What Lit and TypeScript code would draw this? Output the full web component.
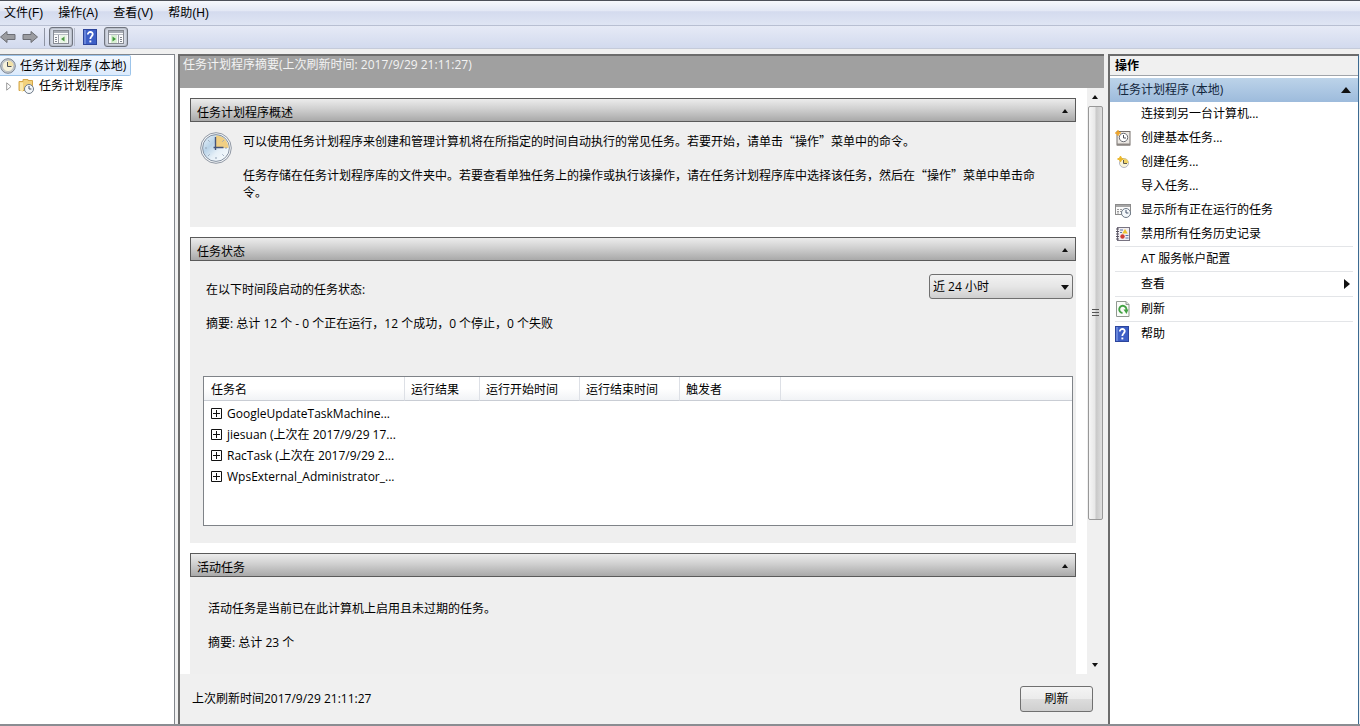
import { LitElement, html, css, svg, nothing } from "lit";
import { customElement, state } from "lit/decorators.js";

const clockIcon = (size: number) => html`
  <svg width=${size} height=${size} viewBox="0 0 32 32" aria-hidden="true">
    <defs>
      <linearGradient id="face" x1="0" y1="0" x2="1" y2="1">
        <stop offset="0" stop-color="#eef6fc" /><stop offset=".35" stop-color="#b9d3e8" /><stop offset=".6" stop-color="#e6f0f8" /><stop offset="1" stop-color="#fbfdfe" />
      </linearGradient>
    </defs>
    <circle cx="16" cy="16" r="15.3" fill="#f3f5f7" stroke="#8f97a3" />
    <circle cx="16" cy="16" r="13.4" fill="url(#face)" stroke="#8692a2" />
    <path d="M16 16V3.500A12.500 12.500 0 0 1 28.500 16z" fill="#f0cf84" />
    <path d="M16 25v2M5 16h2M25 16h2M8.200 8.200l1.400 1.400M22.400 22.400l1.400 1.400M8.200 23.800l1.400-1.400M22.400 9.600l1.400-1.400" stroke="#93a3b6" />
    <path d="M15.500 5v13M13.500 15.500h10" stroke="#46557a" stroke-width="1.400" fill="none" />
  </svg>`;

const smallClock = svg`
  <circle cx="11" cy="11" r="4.500" fill="#f4f8fb" stroke="#6d7987" />
  <path d="M11 8v3h2.400" fill="none" stroke="#44536b" />`;

const treeClock = html`
  <svg width="16" height="16" viewBox="0 0 16 16" aria-hidden="true">
    <circle cx="8" cy="8" r="7.300" fill="#c9cdd2" stroke="#7c8590" />
    <circle cx="8" cy="8" r="5.600" fill="#f6f2dc" stroke="#a5adb5" stroke-width=".6" />
    <path d="M8 8V2.400A5.600 5.600 0 0 1 13.600 8z" fill="#f2e2a8" />
    <path d="M7.500 4v4.500h4" fill="none" stroke="#4a4e58" />
  </svg>`;

const folderIcon = html`
  <svg width="16" height="16" viewBox="0 0 16 16" aria-hidden="true">
    <path d="M1 3.500h4V1.500h5v1h4.500v10H1z" fill="#f3d27c" stroke="#d4a64a" />
    <path d="M2 4.500h3V14l-3-1.500z" fill="#fbe9ae" />
    ${smallClock}
  </svg>`;

const basicTaskIcon = html`
  <svg width="16" height="16" viewBox="0 0 16 16" aria-hidden="true">
    <rect x="2" y="1.500" width="13" height="13.500" fill="#ebe8e4" stroke="#77706c" />
    <path d="M2 13.500h13V15.500H2z" fill="#8c8682" />
    <circle cx="8.500" cy="7.500" r="4.200" fill="#fff" stroke="#6b6d74" />
    <path d="M8.500 5v3H11" fill="none" stroke="#4b4e58" />
    <path d="M3 0l.9 2.100L6 3l-2.100.9L3 6l-.9-2.100L0 3l2.100-.9z" fill="#f0a62a" stroke="#f0a62a" stroke-width=".6" />
  </svg>`;

const newTaskIcon = html`
  <svg width="16" height="16" viewBox="0 0 16 16" aria-hidden="true">
    <circle cx="9" cy="9" r="4.500" fill="#f8f3d8" stroke="#b3b6c4" />
    <path d="M9 9V4.500A4.500 4.500 0 0 1 13.500 9z" fill="#f0d264" />
    <path d="M8.500 6v3.500h3.500" fill="none" stroke="#5c5a4c" />
    <path d="M5.500 2l.9 2.100 2.100.9-2.100.9L5.500 8l-.9-2.100L2.500 5l2.100-.9z" fill="#ecb82a" stroke="#ecb82a" />
  </svg>`;

const runningIcon = html`
  <svg width="16" height="16" viewBox="0 0 16 16" aria-hidden="true">
    <rect x=".5" y="2.500" width="15" height="10" fill="#fafafa" stroke="#8b8b8b" />
    <path d="M1 3h14v2H1z" fill="#a6a6a6" />
    <path d="M2 7.500h2M5 7.500h2M2 9.500h2M5 9.500h2M2 11h2" stroke="#9c9c9c" />
    ${smallClock}
  </svg>`;

const historyIcon = html`
  <svg width="16" height="16" viewBox="0 0 16 16" aria-hidden="true">
    <rect x="2.500" y="1.500" width="12" height="13" fill="#f1eef2" stroke="#777381" />
    <path d="M1 3h3M1 5.500h3M1 8h3M1 10.500h3M1 13h3" stroke="#55515e" />
    <path d="M10 3l2.800 4.500H7.200z" fill="#ecc42e" />
    <path d="M5 4h3M5 6.500h2M10.500 9.500h3M10.500 12h3" stroke="#5b78a8" />
    <circle cx="7.500" cy="10.500" r="2.200" fill="#cf3d33" />
  </svg>`;

const refreshIcon = html`
  <svg width="16" height="16" viewBox="0 0 16 16" aria-hidden="true">
    <path d="M1.500.5h9.500l3 3v12H1.500z" fill="#fafcf9" stroke="#909890" />
    <path d="M11 .5v3h3" fill="#dfe4df" stroke="#909890" />
    <path d="M10.900 10.300A3.600 3.600 0 1 0 7.500 12" fill="none" stroke="#44a244" stroke-width="1.900" />
    <path d="M8.500 8.500h5l-2 4.500z" fill="#44a244" />
  </svg>`;

const helpIcon = html`
  <svg width="14" height="16" viewBox="0 0 14 16" aria-hidden="true">
    <rect x=".5" y=".5" width="13" height="15" fill="#3d5fc6" stroke="#2c459c" />
    <path d="M1 1h2v14H1z" fill="#6785da" />
    <path d="M4.800 5.500C4.800 2 10.200 2.300 9.700 5.500 9.400 7.300 7.300 7.500 7.300 10" fill="none" stroke="#fff" stroke-width="1.800" />
    <rect x="6.400" y="11.500" width="1.900" height="1.900" fill="#fff" />
  </svg>`;

const arrowIcon = (d: string) => html`
  <svg width="16" height="16" viewBox="0 0 16 16" aria-hidden="true">
    <path d=${d} fill="#9b9ca0" stroke="#6c6e75" />
  </svg>`;

const paneIcon = (right: boolean) => html`
  <svg width="16" height="16" viewBox="0 0 16 16" aria-hidden="true">
    <rect x=".5" y="1.500" width="15" height="13" fill="#fbfbfb" stroke="#878b93" />
    <path d="M1 2h14v2H1z" fill="#a6abb4" />
    <path d="M1 5.500h14" stroke="#b7bbc2" />
    ${right
      ? svg`<path d="M10.500 6v8" stroke="#9a9ea6" /><path d="M12 8.500h2M12 10.500h2M12 12.500h2" stroke="#7f8590" /><path d="M3 6h6v8H3z" fill="#d9efd3" /><path d="M4.500 7.500L8 10l-3.500 2.500z" fill="#3f9a3a" />`
      : svg`<path d="M5.500 6v8" stroke="#9a9ea6" /><path d="M2 8.500h2M2 10.500h2M2 12.500h2" stroke="#7f8590" /><path d="M7 6h7v8H7z" fill="#eaf5e6" /><path d="M11.500 7.500L8 10l3.500 2.500z" fill="#4e9a45" />`}
  </svg>`;

const triangle = (dir: "up" | "down" | "right", w: number, h: number) => {
  const points = { up: `0,${h} ${w},${h} ${w / 2},0`, down: `0,0 ${w},0 ${w / 2},${h}`, right: `0,0 ${w},${h / 2} 0,${h}` }[dir];
  return html`<svg width=${w} height=${h} viewBox="0 0 ${w} ${h}" aria-hidden="true"><polygon points=${points} fill="#111" /></svg>`;
};

const menus = ["文件(F)", "操作(A)", "查看(V)", "帮助(H)"];
const columns = ["任务名", "运行结果", "运行开始时间", "运行结束时间", "触发者", ""];
const tasks = [
  "GoogleUpdateTaskMachine...",
  "jiesuan (上次在 2017/9/29 17...",
  "RacTask (上次在 2017/9/29 2...",
  "WpsExternal_Administrator_...",
];

interface Action { label: string; icon?: unknown; divided?: boolean; submenu?: boolean }
const actions: Action[] = [
  { label: "连接到另一台计算机..." },
  { label: "创建基本任务...", icon: basicTaskIcon },
  { label: "创建任务...", icon: newTaskIcon },
  { label: "导入任务..." },
  { label: "显示所有正在运行的任务", icon: runningIcon },
  { label: "禁用所有任务历史记录", icon: historyIcon },
  { label: "AT 服务帐户配置", divided: true },
  { label: "查看", divided: true, submenu: true },
  { label: "刷新", icon: refreshIcon, divided: true },
  { label: "帮助", icon: helpIcon, divided: true },
];

@customElement("app-root")
export class AppRoot extends LitElement {
  @state() private closed = new Set<string>();

  static styles = css`
    :host {
      display: flex;
      flex-direction: column;
      height: 100vh;
      box-sizing: border-box;
      border-top: 1px solid #4c5059;
      background: #f0f0f0;
      color: #000;
      font: 12px/16px "Open Sans", "Noto Sans", "Noto Sans CJK SC", sans-serif;
      overflow: hidden;
    }
    * { box-sizing: border-box; }
    svg { display: block; flex: none; }
    button, select { font: inherit; color: inherit; margin: 0; }
    ul, h1, h2, p { margin: 0; padding: 0; font: inherit; list-style: none; }
    .plain { border: 0; padding: 0; background: none; text-align: left; white-space: nowrap; }

    .menubar {
      display: flex;
      gap: 15px;
      padding: 0 4px;
      height: 24px;
      align-items: center;
      background: linear-gradient(#f6f8fc, #e3e8f5 40%, #d4dbee 45%, #dfe5f4);
      font-family: "Liberation Sans", "Noto Sans CJK SC", sans-serif;
    }
    .toolbar {
      display: flex;
      align-items: center;
      height: 24px;
      border-top: 1px solid #b8bfd2;
      border-bottom: 1px solid #c5cbda;
      background: linear-gradient(#e6eaf6, #d2daee);
    }
    .tool { display: flex; align-items: center; justify-content: center; width: 24px; height: 20px; }
    .tool.arrow { width: 22px; justify-content: flex-start; }
    .tool.help { width: 28px; }
    .tool.on { border: 1px solid #6f747e; border-radius: 3px; background: #d3d8e4; box-shadow: inset 0 0 2px #7b808b; }
    .rule { width: 1px; height: 18px; background: #8e94a3; margin: 0 4px 0 0; }
    .rule.light { margin: 0 1px; background: #b3b9c8; }

    .panes { flex: 1; min-height: 0; display: flex; gap: 3px; padding: 5px 1px 0 0; border-bottom: 2px solid #8a8d92; }
    .tree { width: 175px; flex: none; background: #fff; border: solid #82868c; border-width: 1px 1px 0 0; }
    .root { display: flex; width: fit-content; align-items: center; gap: 4px; height: 21px; padding: 0 4px 0 0; border: 1px solid #9cc4ea; border-left: 0; border-radius: 0 2px 2px 0; background: linear-gradient(#f1f7fe, #dbeafc); }
    .leaf { display: flex; align-items: center; gap: 5px; height: 20px; padding-left: 5px; }
    .twist { display: flex; width: 8px; justify-content: center; }

    .center { flex: 1; min-width: 0; display: flex; flex-direction: column; border: solid #6c6c6c; border-width: 2px 0 0 2px; }
    .title { height: 32px; flex: none; padding: 0 3px; background: #a0a0a0; color: #f3f3f3; line-height: 18px; }
    .view { flex: 1; min-height: 0; display: flex; background: #fff; }
    .sections { flex: 1; min-width: 0; overflow: hidden; display: flex; flex-direction: column; gap: 10px; padding: 10px 11px 0 10px; }
    .section { flex: none; background: #efefef; }
    .head { display: flex; width: 100%; align-items: center; justify-content: space-between; height: 24px; padding: 5px 7px 0 6px; border: 1px solid #5a5a5a; background: linear-gradient(#ececec, #d0d0d0 45%, #a9a9a9); }
    .head svg { margin-bottom: 4px; }
    .overview { display: flex; gap: 11px; padding: 10px 36px 27px 10px; }
    .overview .text { display: flex; flex-direction: column; gap: 17px; line-height: 17px; font-family: "Noto Sans CJK SC", sans-serif; }
    .status { padding: 13px 3px 17px 13px; }
    .period { display: flex; justify-content: space-between; align-items: flex-start; }
    .period label { padding: 8px 0 0 3px; }
    .picker { position: relative; width: 144px; }
    .picker select { appearance: none; display: block; width: 100%; height: 25px; padding: 0 3px; border: 1px solid #707070; border-radius: 3px; background: linear-gradient(#f2f2f2, #e6e6e6 50%, #cfcfcf); }
    .picker svg { position: absolute; right: 4px; top: 11px; pointer-events: none; }
    .summary { padding: 17px 3px 44px; }
    .list { height: 150px; border: 1px solid #7f8388; background: #fff; overflow: hidden; }
    table { width: 100%; border-collapse: separate; border-spacing: 0; table-layout: fixed; }
    th { height: 24px; padding: 2px 0 0 6px; text-align: left; font-weight: 400; border-right: 1px solid #dde0e6; border-bottom: 1px solid #c9cdd4; background: linear-gradient(#fff, #fff 50%, #f1f3f6); }
    th:first-child { padding-left: 7px; }
    th:last-child { border-right: 0; }
    .c0 { width: 201px; } .c1 { width: 75px; } .c2, .c3 { width: 100px; } .c4 { width: 101px; }
    td { padding: 0; height: 21px; white-space: nowrap; }
    tr.first td { height: 23px; padding-top: 2px; }
    .task { display: flex; align-items: center; gap: 5px; padding-left: 7px; }
    .active { padding: 24px 18px 40px; display: flex; flex-direction: column; gap: 18px; }

    .scroll { width: 17px; flex: none; display: flex; flex-direction: column; align-items: center; background: #f0f0f0; padding-right: 1px; }
    .step { display: flex; align-items: center; justify-content: center; width: 100%; height: 18px; flex: none; }
    .thumb { flex: 413; width: 15px; border: 1px solid #989898; border-radius: 2px; background: linear-gradient(90deg, #f6f6f6, #e8e8e8 45%, #c9c9c9 55%, #dedede); display: flex; align-items: center; justify-content: center; }
    .rest { flex: 136; }
    .foot { height: 50px; flex: none; display: flex; align-items: center; justify-content: space-between; padding: 0 11px 0 12px; }
    .refresh { width: 73px; height: 26px; border: 1px solid #707070; border-radius: 3px; background: linear-gradient(#f4f4f4, #ebebeb 50%, #dcdcdc 51%, #cfcfcf); padding: 0; }

    .actions { width: 251px; flex: none; margin-left: 1px; background: #fff; border: solid #6c6c6c; border-width: 2px 1px 0 2px; border-right-color: #3c6a92; }
    .caption { height: 20px; line-height: 20px; padding-left: 5px; font-weight: 700; background: #f0f0f0; border-bottom: 1px solid #a0a4aa; }
    .group { display: flex; width: 100%; align-items: center; justify-content: space-between; height: 24px; margin: 2px 0 0; padding: 0 7px; background: linear-gradient(#bcd3e9, #9dbbdc); color: #12263c; }
    .action { display: grid; grid-template-columns: 16px 1fr auto; column-gap: 10px; align-items: center; width: 100%; height: 24px; padding: 0 8px 0 5px; }
    .divided { border-top: 1px solid #e3e5e8; margin: 0 5px; }
    .divided .action { padding: 0 3px 0 0; }
  `;

  private toggle(name: string) {
    const next = new Set(this.closed);
    next.has(name) ? next.delete(name) : next.add(name);
    this.closed = next;
  }

  private section(name: string, body: unknown) {
    const open = !this.closed.has(name);
    return html`<section class="section">
      <h2><button class="head" aria-expanded=${open} @click=${() => this.toggle(name)}>
        <span>${name}</span>${triangle(open ? "up" : "down", 6, 4)}
      </button></h2>
      ${open ? body : nothing}
    </section>`;
  }

  render() {
    return html`
      <nav class="menubar">${menus.map((m) => html`<button class="plain">${m}</button>`)}</nav>
      <div class="toolbar">
        <button class="plain tool arrow" aria-label="后退">${arrowIcon("M.5 8L7 2.500v3h8v5H7v3z")}</button>
        <button class="plain tool arrow" aria-label="前进">${arrowIcon("M15.500 8L9 2.500v3H1v5h8v3z")}</button>
        <span class="rule"></span>
        <button class="plain tool on" aria-label="控制台树">${paneIcon(false)}</button>
        <span class="rule light"></span>
        <button class="plain tool help" aria-label="帮助">${helpIcon}</button>
        <button class="plain tool on" aria-label="操作窗格">${paneIcon(true)}</button>
      </div>
      <div class="panes">
        <nav class="tree">
          <button class="plain root">${treeClock}<span>任务计划程序 (本地)</span></button>
          <div class="leaf">
            <button class="plain twist" aria-label="展开">
              <svg width="6" height="9" viewBox="0 0 6 9"><path d="M.7.8L5 4.500.7 8.200z" fill="#fff" stroke="#9a9a9a" /></svg>
            </button>
            ${folderIcon}<button class="plain">任务计划程序库</button>
          </div>
        </nav>

        <main class="center">
          <h1 class="title">任务计划程序摘要(上次刷新时间: 2017/9/29 21:11:27)</h1>
          <div class="view">
            <div class="sections">
              ${this.section("任务计划程序概述", html`
                <div class="overview">
                  ${clockIcon(32)}
                  <div class="text">
                    <p>可以使用任务计划程序来创建和管理计算机将在所指定的时间自动执行的常见任务。若要开始，请单击“操作”菜单中的命令。</p>
                    <p>任务存储在任务计划程序库的文件夹中。若要查看单独任务上的操作或执行该操作，请在任务计划程序库中选择该任务，然后在“操作”菜单中单击命令。</p>
                  </div>
                </div>`)}
              ${this.section("任务状态", html`
                <div class="status">
                  <div class="period">
                    <label for="period">在以下时间段启动的任务状态:</label>
                    <div class="picker">
                      <select id="period"><option>近 24 小时</option></select>
                      ${triangle("down", 8, 5)}
                    </div>
                  </div>
                  <p class="summary">摘要: 总计 12 个 - 0 个正在运行，12 个成功，0 个停止，0 个失败</p>
                  <div class="list">
                    <table>
                      <thead><tr>${columns.map((c, i) => html`<th class="c${i}">${c}</th>`)}</tr></thead>
                      <tbody>${tasks.map((t, i) => html`
                        <tr class=${i === 0 ? "first" : ""}><td colspan="6"><div class="task">
                          <button class="plain" aria-label="展开">
                            <svg width="11" height="11" viewBox="0 0 11 11"><path d="M.5.5h10v10H.5zM2 5.500h7M5.500 2v7" fill="none" stroke="#111" /></svg>
                          </button><span>${t}</span>
                        </div></td></tr>`)}</tbody>
                    </table>
                  </div>
                </div>`)}
              ${this.section("活动任务", html`
                <div class="active">
                  <p>活动任务是当前已在此计算机上启用且未过期的任务。</p>
                  <p>摘要: 总计 23 个</p>
                </div>`)}
            </div>
            <div class="scroll">
              <button class="plain step" aria-label="向上滚动">${triangle("up", 6, 4)}</button>
              <div class="thumb"><svg width="7" height="8" viewBox="0 0 7 8"><path d="M0 .5h7M0 3.500h7M0 6.500h7" stroke="#555" /></svg></div>
              <div class="rest"></div>
              <button class="plain step" aria-label="向下滚动">${triangle("down", 6, 4)}</button>
            </div>
          </div>
          <footer class="foot">
            <span>上次刷新时间2017/9/29 21:11:27</span>
            <button class="refresh">刷新</button>
          </footer>
        </main>

        <aside class="actions">
          <h2 class="caption">操作</h2>
          <button class="plain group"><span>任务计划程序 (本地)</span>${triangle("up", 10, 6)}</button>
          <ul>${actions.map((a) => html`
            <li class=${a.divided ? "divided" : ""}>
              <button class="plain action">
                <span>${a.icon ?? nothing}</span><span>${a.label}</span>${a.submenu ? triangle("right", 6, 10) : nothing}
              </button>
            </li>`)}</ul>
        </aside>
      </div>`;
  }
}
